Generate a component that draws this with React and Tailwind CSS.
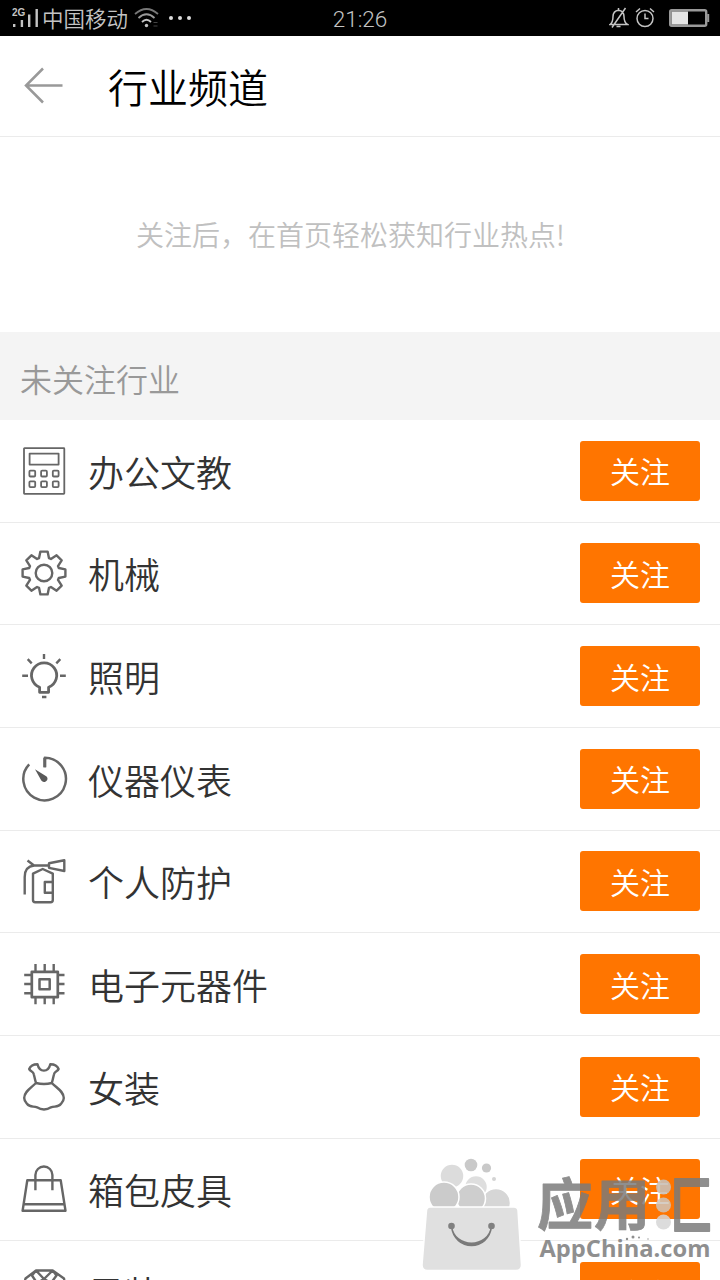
import React, { useState } from "react";
import clsx from "clsx";

const CalculatorIcon = () => (
  <>
    <rect x="4" y="1.2" width="40.3" height="45.6" rx="0.5" strokeWidth="1.8" />
    <rect x="9.6" y="6.6" width="29" height="11" strokeWidth="1.8" />
    {[12.3, 24, 35.7].map((x) =>
      [26.6, 37.2].map((y) => (
        <rect key={`${x}-${y}`} x={x - 2.9} y={y - 2.9} width="5.8" height="5.8" rx="1" strokeWidth="1.8" />
      ))
    )}
  </>
);

// One tooth is four points, repeated every 45 degrees
const gearPoints = Array.from({ length: 8 })
  .flatMap((_, i) => {
    const a = (i * Math.PI) / 4;
    return [
      [-5, -14.8],
      [-3.6, -21.4],
      [3.6, -21.4],
      [5, -14.8],
    ].map(([x, y]) => {
      const px = 24 + x * Math.cos(a) - y * Math.sin(a);
      const py = 24 + x * Math.sin(a) + y * Math.cos(a);
      return `${px.toFixed(2)},${py.toFixed(2)}`;
    });
  })
  .join(" ");

const GearIcon = () => (
  <>
    <polygon points={gearPoints} />
    <circle cx="24" cy="24" r="8.3" />
  </>
);

const BulbIcon = () => (
  <>
    <path d="M19.6 40.3V35.2A12.6 12.6 0 1 1 28.6 35.2V40.3Z" strokeWidth="2.8" />
    <path d="M22 45H26.4M24 2V7M2.2 23.7H8M40 23.7H45.8M7.7 7.2L11.7 11.3M40.3 7.2L36.3 11.3" />
  </>
);

const GaugeIcon = () => (
  <>
    <path d="M24.8 12.3V2.7A21.3 21.3 0 1 1 9.2 9.3" strokeWidth="2.5" />
    <path d="M24.8 12.3V3" strokeWidth="3" />
    <path d="M15 14.2L26.6 21.4A3.2 3.2 0 1 1 21.3 25.6Z" fill="#595959" stroke="none" />
  </>
);

const ExtinguisherIcon = () => (
  <>
    <path d="M22.7 12L13 16.6V43Q13 45.2 15.2 45.2H30.6Q32.8 45.2 32.8 43V16.6Z" />
    <path d="M32.8 25H24.8V35.8H32.8" />
    <path d="M7.5 3.5L14 8.5H29M29 6.2L44.3 3.2V14L29 10.8Z" />
    <path d="M14 8.5Q4.7 9.5 4.7 20V37.5" />
  </>
);

const ChipIcon = () => (
  <>
    <rect x="11.8" y="11.8" width="26" height="25.4" strokeWidth="2.7" />
    <rect x="19.5" y="19.2" width="10.2" height="10" strokeWidth="2.5" />
    <path d="M15.5 4V11M24.7 4V11M33.7 4V11M15.5 38V44.2M24.7 38V44.2M33.7 38V44.2M4.2 15H11M4.2 24H11M4.2 33.2H11M38 15H44.5M38 24H44.5M38 33.2H44.5" />
  </>
);

const DressIcon = () => (
  <path d="M17.5 1.2C18.5 5.5 20.5 7.6 23.9 7.6S29.3 5.5 30.3 1.2C34.5 1.2 37.5 3 38.6 6C37.8 8.4 34.6 8.4 34 11.2C33.2 14.5 32.8 17 31.8 20Q24 22 16 20C15 17 14.6 14.5 13.8 11.2C13.2 8.4 10 8.4 9.2 6C10.3 3 13.3 1.2 17.5 1.2ZM16 20C11 25 4.2 28.5 4.2 35C4.2 38 5.8 39.3 7.2 41C9.5 44.3 13.5 43 17 44.3C19.5 46 22 46.5 24 46.5S28.5 46 31 44.3C34.5 43 38.5 44.3 40.8 41C42.2 39.3 43.8 38 43.8 35C43.8 28.5 36.8 25 31.8 20" />
);

const BagIcon = () => (
  <>
    <path d="M7.3 15.3H40.7L45.5 45.8H2.6ZM3.7 39.2H44.5" />
    <path d="M15.4 25.2V10A8.5 8.5 0 0 1 32.4 10V25.2" />
  </>
);

const ShirtIcon = () => (
  <path d="M16 2.5H32.7L44 10.5L46 24H38V46H10V24H2L5.5 10.5ZM16 2.5L24 11L32.7 2.500M16 2.500L12 7.5L17 15L24 11L31 15L36.5 7.5L32.7 2.500" />
);

const channels = [
  { name: "办公文教", Icon: CalculatorIcon },
  { name: "机械", Icon: GearIcon },
  { name: "照明", Icon: BulbIcon },
  { name: "仪器仪表", Icon: GaugeIcon },
  { name: "个人防护", Icon: ExtinguisherIcon },
  { name: "电子元器件", Icon: ChipIcon },
  { name: "女装", Icon: DressIcon },
  { name: "箱包皮具", Icon: BagIcon },
  { name: "男装", Icon: ShirtIcon },
];

const StatusBar = () => (
  <div className="relative flex h-9 shrink-0 items-center justify-between bg-black pl-3 pr-2.5 text-[#c4c4c4]">
    <div className="flex items-center">
      <svg width="28" height="24" viewBox="0 0 28 24" fill="currentColor">
        <text x="0" y="10" fontSize="10" fontWeight="700" fontFamily="Liberation Sans, sans-serif">2G</text>
        <path d="M1 18h2.4v3H1zM8.7 14h2.4v7H8.7zM16 8.5h2.4V21H16zM23.5 3h2.4v18h-2.4z" />
      </svg>
      <span className="ml-0.5 text-[21.5px] font-[350] leading-9">中国移动</span>
      <svg className="ml-1.5" width="25" height="22" viewBox="0 0 25 22" fill="none" stroke="currentColor" strokeWidth="1.8">
        <path d="M1 7Q12.5-3 24 7" stroke="#777" />
        <path d="M4.5 11Q12.5 3.5 20.5 11" stroke="#999" />
        <path d="M8 15Q12.5 10.5 17 15" />
        <circle cx="12.5" cy="18.5" r="1.7" fill="currentColor" stroke="none" />
        <path d="M19.5 15.5h4M19.5 19h4" stroke="#444" strokeWidth="1.2" />
      </svg>
      <div className="ml-2.5 flex gap-[5px]">
        <i className="size-1 rounded-full bg-[#ddd]" />
        <i className="size-1 rounded-full bg-[#ddd]" />
        <i className="size-1 rounded-full bg-[#ddd]" />
      </div>
    </div>
    <span className="absolute left-1/2 -translate-x-1/2 pt-0.5 font-['Roboto'] text-[22.5px] font-light leading-9">21:26</span>
    <div className="flex items-center">
      <svg width="20" height="22" viewBox="0 0 20 22" fill="none" stroke="currentColor" strokeWidth="1.5">
        <path d="M1 17.5Q4 15.5 4 9.5Q4.2 4 9.5 3.3Q14.8 4 15 9.5Q15 15.5 18.5 17.5ZM9.5 1V3.5M7.5 19.5H11.5M16.5 1L3 20.5" />
      </svg>
      <svg className="ml-1.5" width="20" height="22" viewBox="0 0 20 22" fill="none" stroke="currentColor" strokeWidth="1.5">
        <circle cx="10" cy="11.5" r="8" />
        <path d="M10 6.5V11.5H13.5M1 5L5 1.5M19 5L15 1.5" />
      </svg>
      <svg className="ml-3.5" width="41" height="18" viewBox="0 0 41 18">
        <rect x="1.2" y="1.2" width="36" height="15.6" rx="1.5" fill="none" stroke="#999" strokeWidth="2.4" />
        <rect x="2.5" y="2.5" width="16.5" height="13" fill="#e4e4e4" />
        <rect x="38.2" y="5" width="2" height="8" fill="#999" />
      </svg>
    </div>
  </div>
);

const ChannelRow = ({ name, Icon, followed, onToggle }) => (
  <li className="flex h-[102.67px] shrink-0 items-center border-b border-[#ebebeb] px-5">
    <svg
      className="size-12 shrink-0"
      viewBox="0 0 48 48"
      fill="none"
      stroke="#666"
      strokeWidth="2.4"
      strokeLinejoin="round"
    >
      <Icon />
    </svg>
    <span className="ml-5 flex-1 text-[36px] font-[350] leading-none text-[#333]">{name}</span>
    <button
      onClick={onToggle}
      className={clsx(
        "flex h-[60px] w-[120px] items-center justify-center rounded-[3px] pb-px text-[30px] font-[350] leading-none text-white",
        followed ? "bg-gray-400" : "bg-[#ff7500]"
      )}
    >
      关注
    </button>
  </li>
);

const Watermark = () => (
  <svg className="pointer-events-none absolute bottom-0 right-0" width="310" height="140" viewBox="0 0 310 140">
    <g stroke="#fff" strokeWidth="1.5">
      <circle cx="42" cy="36" r="12" fill="#dcdcdc" />
      <circle cx="66" cy="47" r="11.5" fill="#dedede" />
      <circle cx="86" cy="63" r="14.5" fill="#d6d6d6" />
      <circle cx="61" cy="58.5" r="14.5" fill="#cecece" />
      <circle cx="34" cy="57" r="15" fill="#cbcbcb" />
    </g>
    <circle cx="61" cy="25" r="6.3" fill="#c9c9c9" />
    <circle cx="76.5" cy="28" r="4.6" fill="#c9c9c9" />
    <circle cx="84" cy="39" r="2" fill="#d4d4d4" />
    <path d="M20 67H104Q107.5 67 108 70.5L111.5 125Q111.5 130.5 106 130.5H17.5Q12 130.5 12 125L16.5 70.5Q17 67 20 67Z" fill="#e0e0e0" stroke="#fff" strokeWidth="1.5" />
    <path d="M41.5 86C44 109 79 109 81.5 86C79 112 44 112 41.5 86Z" fill="#7a7a7a" stroke="#7a7a7a" strokeWidth="1.5" />
    <circle cx="41.5" cy="86" r="3.3" fill="#808080" />
    <circle cx="81.5" cy="86" r="3.3" fill="#808080" />
    <g fill="#7a7a7a" opacity="0.84">
      <g fontFamily="Noto Sans CJK SC, sans-serif" fontWeight="700" stroke="#7a7a7a" strokeWidth="0.8" strokeLinejoin="round">
        <text x="127" y="85" fontSize="56">应</text>
        <text x="184" y="85" fontSize="56">用</text>
        <text transform="translate(260.5 89) scale(0.68 1)" fontSize="62" strokeWidth="2">匚</text>
      </g>
      <text x="129.5" y="117" fontSize="22.5" fontWeight="700" fontFamily="Open Sans, sans-serif" textLength="171" lengthAdjust="spacingAndGlyphs">AppChina.com</text>
      <circle cx="217" cy="99" r="1.2" />
      <circle cx="223" cy="97" r="1.5" />
      <circle cx="229" cy="97.5" r="1" />
      <circle cx="238" cy="99" r="0.7" />
    </g>
    <circle cx="253.5" cy="47" r="7.5" fill="#cabfb5" fillOpacity="0.9" />
    <circle cx="253.5" cy="65" r="7.5" fill="#cfc4ba" fillOpacity="0.85" />
    <circle cx="253.5" cy="82" r="7.5" fill="#d6d6d6" fillOpacity="0.85" />
  </svg>
);

const App = () => {
  const [followed, setFollowed] = useState([]);

  const handleToggle = (name) => {
    setFollowed((prev) =>
      prev.includes(name) ? prev.filter((n) => n !== name) : [...prev, name]
    );
  };

  return (
    <div className="relative flex h-[1280px] w-[720px] flex-col overflow-hidden bg-white font-['Noto_Sans_CJK_SC',sans-serif]">
      <StatusBar />
      <header className="flex h-[101px] shrink-0 items-center border-b border-[#ebebeb] px-6">
        <svg width="40" height="38" viewBox="0 0 40 38" fill="none" stroke="#999" strokeWidth="2.5">
          <path d="M19 1.5L2 18.5L19 35.5M2 18.5H38.5" />
        </svg>
        <h1 className="ml-11 text-[40px] font-[350] leading-none text-black">行业频道</h1>
      </header>
      <p className="h-[195px] shrink-0 pl-[136px] pt-[83px] text-[28px] font-[350] leading-none text-[#c0c0c0]">
        关注后，在首页轻松获知行业热点!
      </p>
      <h2 className="flex h-22 shrink-0 items-center bg-[#f4f4f4] px-5 pt-1 text-[32px] font-[350] leading-none text-[#999]">
        未关注行业
      </h2>
      <ul className="flex flex-col">
        {channels.map((c) => (
          <ChannelRow
            key={c.name}
            name={c.name}
            Icon={c.Icon}
            followed={followed.includes(c.name)}
            onToggle={() => handleToggle(c.name)}
          />
        ))}
      </ul>
      <Watermark />
    </div>
  );
};

export default App;
